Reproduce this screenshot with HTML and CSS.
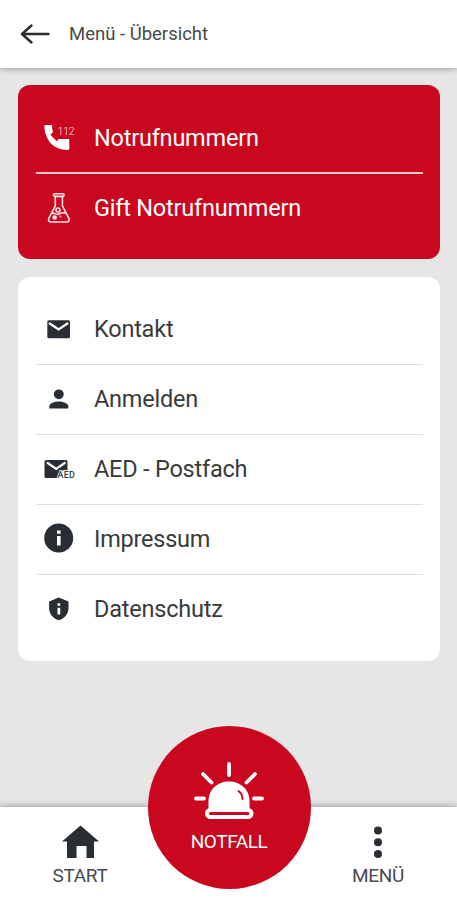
FILE: index.html
```html
<!DOCTYPE html>
<html lang="de">
<head>
<meta charset="utf-8">
<title>Menü - Übersicht</title>
<link rel="stylesheet" href="styles.css">
</head>
<body>
<header class="topbar">
  <svg class="back" viewBox="0 0 30 24"><path d="M28.500 12H2M11.500 3.500L2 12l9.500 8.500"/></svg>
  <h1 class="title">Menü - Übersicht</h1>
</header>
<main class="content">
  <nav class="card card-red">
    <a class="row">
      <svg class="icon" viewBox="0 0 40 40"><path transform="translate(.4 2.9) scale(1.37)" d="M6.620 10.790c1.440 2.830 3.760 5.140 6.590 6.590l2.200-2.200c.27-.27.67-.36 1.020-.24 1.120.37 2.330.57 3.570.57.550 0 1 .45 1 1V20c0 .55-.45 1-1 1-9.390 0-17-7.610-17-17 0-.55.450-1 1-1h3.500c.550 0 1 .45 1 1 0 1.250.200 2.450.570 3.570.110.350.030.740-.250 1.020l-2.200 2.200z"/><path d="M4.700 7h7.100v7.500l-2 1.800 7 7 2-2.200h10.400v10.500h-3.500C13.500 31.600 4.500 22 4.700 7z"/><text class="num" x="17.500" y="17" textLength="17">112</text></svg>
      <span class="label">Notrufnummern</span>
    </a>
    <a class="row">
      <svg class="icon line" viewBox="0 0 40 40"><rect x="13.500" y="5.800" width="10.600" height="2.600" rx="1.300"/><path d="M15.300 8.500v9.300L8.900 30.200c-1 2 0 3.800 2.200 3.800h15.500c2.200 0 3.200-1.800 2.200-3.800l-6.400-12.400V8.500M11.500 26c2-3 4.500 1.800 7.500 0s4.500-2 7-.5"/><circle cx="18" cy="22" r="2"/><circle class="dot" cx="14.600" cy="29.500" r="1.500"/><circle class="dot" cx="20.500" cy="28.500" r=".3"/></svg>
      <span class="label">Gift Notrufnummern</span>
    </a>
  </nav>
  <nav class="card">
    <a class="row">
      <svg class="icon" viewBox="0 0 40 40"><rect x="7.300" y="10.300" width="22.700" height="18" rx="1.500"/><path class="cut" d="M9 13l9.600 6.500 9.600-6.500"/></svg>
      <span class="label">Kontakt</span>
    </a>
    <a class="row">
      <svg class="icon" viewBox="0 0 40 40"><circle cx="18.800" cy="14.300" r="4.900"/><path d="M9.300 28.500v-2.300c0-3.200 5.300-4.800 9.500-4.800s9.500 1.600 9.500 4.800v2.300z"/></svg>
      <span class="label">Anmelden</span>
    </a>
    <a class="row">
      <svg class="icon" viewBox="0 0 40 40"><path d="M6.500 10h19.500q1.500 0 1.500 1.500v9h-6.500L17 28H6q-1.500 0-1.500-1.500V11.500q0-1.500 2-1.500z"/><path class="cut" d="M7 12.500l9.200 6.500 9.200-6.500"/><text class="aed" x="17.500" y="27.800" textLength="17.500">AED</text></svg>
      <span class="label">AED - Postfach</span>
    </a>
    <a class="row">
      <svg class="icon" viewBox="0 0 40 40"><circle cx="18.700" cy="19" r="14.500"/><path class="hole" d="M17 11.500h3.600v3.200H17zM17 17h3.600v9.500H17z"/></svg>
      <span class="label">Impressum</span>
    </a>
    <a class="row">
      <svg class="icon" viewBox="0 0 40 40"><path d="M18.800 7.500l9.700 4v6.500c0 5.600-4 10.800-9.700 12.300-5.700-1.500-9.700-6.700-9.700-12.300v-6.500z"/><path class="hole" d="M17.500 13.300h2.700v2.500h-2.700zM17.500 17.800h2.700v6.800h-2.700z"/></svg>
      <span class="label">Datenschutz</span>
    </a>
  </nav>
</main>
<footer class="tabbar">
  <a class="tab"><svg class="tab-icon" viewBox="0 0 40 36"><path d="M20.500 1.500L39 17.500h-5V34h-7.500V22h-10v12H7V17.500H2z"/></svg><span class="tab-label">START</span></a>
  <a class="alarm">
    <svg class="siren" viewBox="0 0 72 58">
      <path class="ray" d="M36 3v11M10 13l8.500 8.500M62 13l-8.500 8.500M3 37.500h8M61 37.500h8"/>
      <path class="dome" d="M15.500 49V40C15.500 28.500 24.500 20.500 36 20.500S56.500 28.500 56.500 40v9z"/>
      <rect class="base" x="14" y="49" width="44.500" height="7" rx="3.500"/>
      <path class="glint" d="M45.500 30q4 2.800 4 8"/>
    </svg>
    <span class="alarm-label">NOTFALL</span>
  </a>
  <a class="tab"><svg class="tab-icon" viewBox="0 0 40 36"><circle cx="20" cy="6.500" r="4"/><circle cx="20" cy="18.300" r="4"/><circle cx="20" cy="30" r="4"/></svg><span class="tab-label">MENÜ</span></a>
</footer>
</body>
</html>
```
FILE: styles.css
```css
* { box-sizing: border-box; }
body {
  margin: 0;
  height: 900px;
  display: flex;
  flex-direction: column;
  overflow: hidden;
  background: #e6e6e6;
  color: #363738;
  font-family: Roboto, sans-serif;
}
svg { display: block; flex: none; overflow: visible; }
.topbar {
  height: 68px;
  display: flex;
  align-items: center;
  gap: 19px;
  padding-left: 20px;
  background: #fff;
  box-shadow: 0 1px 6px rgba(0, 0, 0, .32);
}
.back { width: 30px; height: 24px; fill: none; stroke: #2b2c2e; stroke-width: 2.4; stroke-linecap: round; stroke-linejoin: round; }
.title { margin: 0; font-size: 18.500px; font-weight: 400; line-height: 24px; color: #48494a; }
.content { flex: 1; padding: 17px 17px 0 18px; }
.card {
  margin-bottom: 18px;
  padding: 18.700px 17px 16.700px 18px;
  border-radius: 12px;
  background: #fff;
  color: #393a3c;
}
.card-red { padding-top: 19px; padding-bottom: 17.400px; background: #c90820; color: #fff; }
.row {
  height: 69.800px;
  display: flex;
  align-items: center;
  gap: 14px;
  padding-left: 4px;
  border-bottom: 1px solid #dedede;
}
.card-red .row { border-bottom: 2px solid #fbc9ce; }
.card .row:last-child { border-bottom: 0; }
.card-red .row:last-child { height: 67.800px; }
.icon { width: 40px; height: 40px; fill: #292e34; }
.card-red .icon { fill: #fff; }
.card-red .line { fill: none; stroke: #ffe5e7; stroke-width: 1.6; stroke-linejoin: round; }
.line .dot { fill: #fff; }
.num { font-size: 11px; font-weight: 300; fill: #ffdce0; }
.aed { font-size: 9px; font-weight: 500; fill: #3b3e42; paint-order: stroke; stroke: #fff; stroke-width: 1.5px; }
.cut { fill: none; stroke: #fff; stroke-width: 2.2; }
.hole { fill: #fff; }
.label { padding-bottom: 1.500px; font-size: 23.500px; line-height: 30px; letter-spacing: -.22px; white-space: nowrap; }
.card-red .label { padding-bottom: 0; }
.tabbar {
  position: relative;
  height: 93px;
  display: flex;
  justify-content: space-between;
  padding: 0 29px 0 30px;
  background: #fff;
  box-shadow: 0 -1px 6px rgba(0, 0, 0, .32);
}
.tab { width: 100px; display: flex; flex-direction: column; align-items: center; padding-top: 17px; }
.tab-icon { width: 40px; height: 36px; fill: #292e34; }
.tab-label { margin-top: 4px; font-size: 19px; line-height: 24px; letter-spacing: -.3px; color: #484a4c; }
.alarm {
  position: absolute;
  left: 147.500px;
  top: -81px;
  width: 163px;
  height: 163px;
  border-radius: 50%;
  background: #c90820;
  color: #fff;
  display: flex;
  flex-direction: column;
  align-items: center;
  padding-top: 35px;
}
.siren { width: 72px; height: 58px; }
.ray { fill: none; stroke: #fff; stroke-width: 3.800; stroke-linecap: round; }
.dome { fill: #fff; }
.base { fill: #c90820; stroke: #fff; stroke-width: 4; }
.glint { fill: none; stroke: #c90820; stroke-width: 2; stroke-linecap: round; }
.alarm-label { margin-top: 11px; font-size: 19px; line-height: 24px; letter-spacing: -.4px; }
```
